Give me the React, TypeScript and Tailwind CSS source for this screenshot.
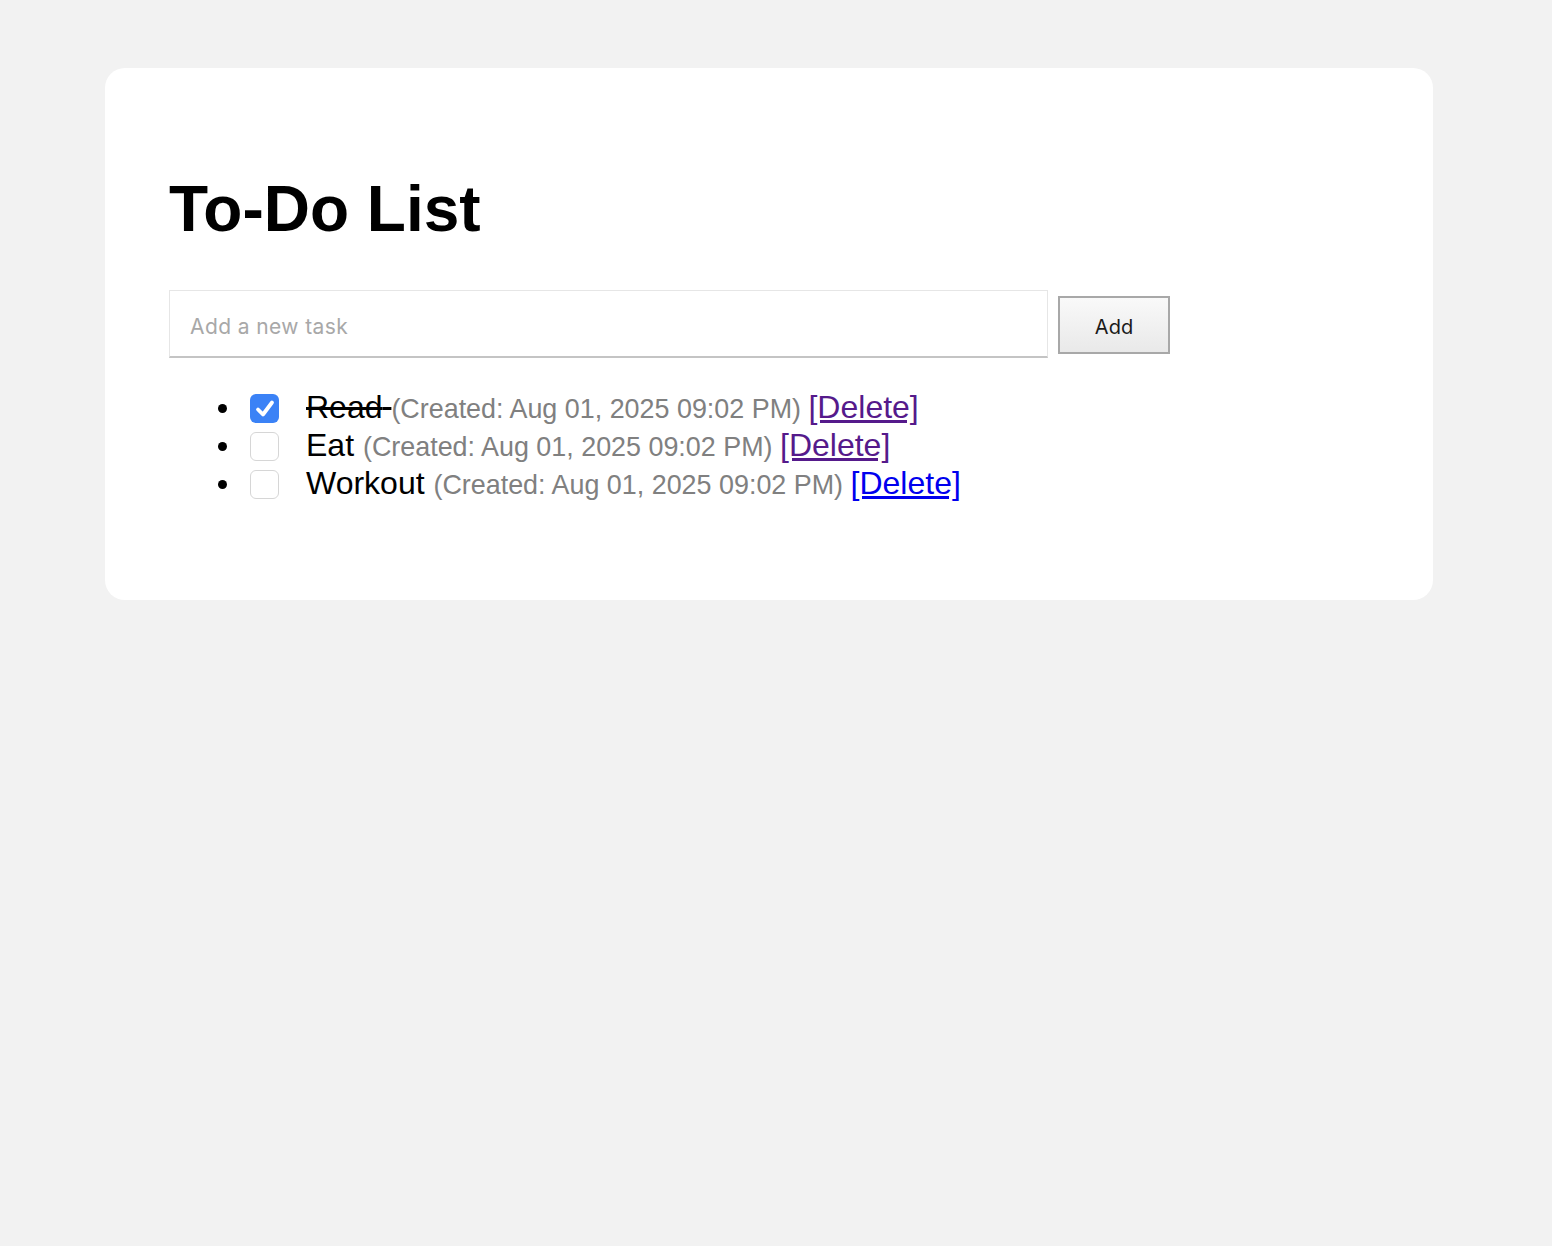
import React from "react";

const items = [
  { name: "Read", done: true, link: "text-[#551a8b]" },
  { name: "Eat", done: false, link: "text-[#551a8b]" },
  { name: "Workout", done: false, link: "text-[#0000ee]" },
];

function Check({ checked }: { checked: boolean }) {
  if (checked) {
    return (
      <div className="w-[29px] h-[29px] rounded-[6px] bg-[#3b82f6] flex items-center justify-center shrink-0">
        <svg width="24" height="24" viewBox="0 0 24 24" fill="none">
          <path d="M5 12.5 L10 17.5 L19 5.5" stroke="white" strokeWidth="3.8" strokeLinecap="round" strokeLinejoin="round" />
        </svg>
      </div>
    );
  }
  return <div className="w-[29px] h-[29px] rounded-[6px] border-[1.5px] border-[#d6d6d6] bg-white shrink-0" />;
}

export default function App() {
  return (
    <div className="min-h-[1246px] bg-[#f2f2f2] pt-[68px] pl-[105px]" style={{ fontFamily: '"Liberation Sans", Arial, sans-serif' }}>
      <div className="w-[1328px] bg-white rounded-[20px] pt-[104px] pb-[97px] px-[64px]">
        <h1 className="text-[64px] leading-[74px] font-bold text-black m-0">To-Do List</h1>
        <div className="flex items-start gap-[10px] mt-[44px]">
          <input
            placeholder="Add a new task"
            className="w-[879px] h-[68px] border border-[#e6e6e6] border-b-[2px] border-b-[#c4c4c4] pl-[20px] pt-[5px] text-[21px] tracking-[0.4px] outline-none placeholder:text-[#a8a8a8]"
            style={{ fontFamily: 'Inter, "Open Sans", sans-serif' }}
          />
          <button
            className="mt-[6px] w-[112px] h-[58px] pt-[4px] border-2 border-[#a8a8a8] bg-gradient-to-b from-[#f9f9f9] to-[#e9e9e9] text-[20px] text-[#1a1a1a]"
            style={{ fontFamily: 'Inter, "Open Sans", sans-serif' }}
          >
            Add
          </button>
        </div>
        <ul className="mt-[31px]">
          {items.map((it) => (
            <li key={it.name} className="flex items-center h-[38px] text-[32px] leading-[38px]">
              <span className="ml-[49px] w-[9px] h-[9px] rounded-full bg-black shrink-0" />
              <span className="ml-[23px] pt-[1px]">
                <Check checked={it.done} />
              </span>
              <span className="ml-[27px] whitespace-nowrap">
                <span className={it.done ? "line-through text-black" : "text-black"}>{it.name} </span>
                <span className="text-[26.9px] text-[#808080]">(Created: Aug 01, 2025 09:02 PM) </span>
                <a href="#" className={`underline ${it.link}`}>[Delete]</a>
              </span>
            </li>
          ))}
        </ul>
      </div>
    </div>
  );
}
